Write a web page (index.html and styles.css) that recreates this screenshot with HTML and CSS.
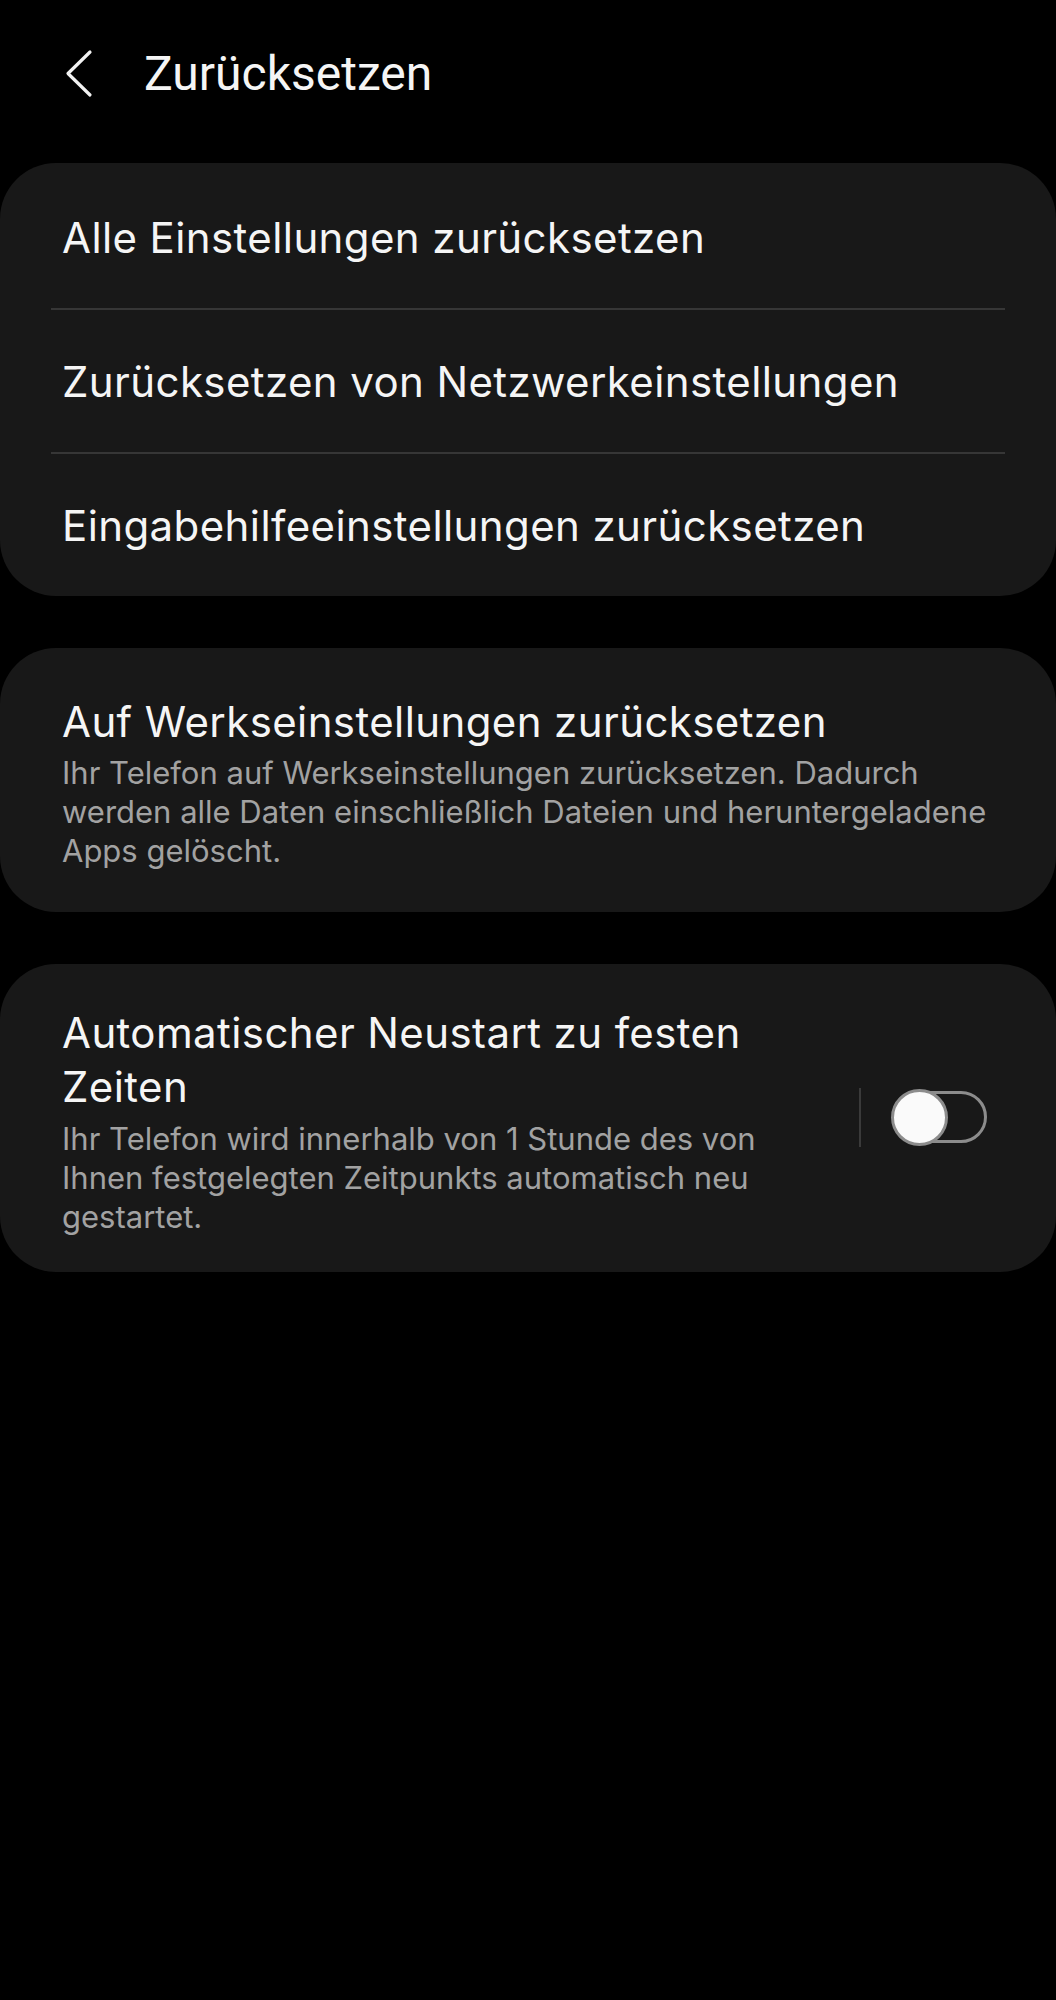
FILE: index.html
```html
<!DOCTYPE html>
<html lang="de">
<head>
    <meta charset="UTF-8">
    <meta name="viewport" content="width=device-width, initial-scale=1.0">
    <title>Zurücksetzen</title>
    <link rel="stylesheet" href="styles.css">
</head>
<body>

<div class="screen">
    <div class="app-bar">
        <svg class="back" width="30" height="50" viewBox="0 0 30 50">
            <polyline points="25,3 3,24.5 25,46" fill="none" stroke="#f2f2f2" stroke-width="3.2" stroke-linecap="round" stroke-linejoin="round"/>
        </svg>
        <h1>Zurücksetzen</h1>
    </div>

    <div class="card">
        <div class="row first">
            <div class="title">Alle Einstellungen zurücksetzen</div>
        </div>
        <div class="divider"></div>
        <div class="row">
            <div class="title">Zurücksetzen von Netzwerkeinstellungen</div>
        </div>
        <div class="divider"></div>
        <div class="row">
            <div class="title">Eingabehilfeeinstellungen zurücksetzen</div>
        </div>
    </div>

    <div class="card">
        <div class="row detail">
            <div class="title">Auf Werkseinstellungen zurücksetzen</div>
            <div class="summary">Ihr Telefon auf Werkseinstellungen zurücksetzen. Dadurch werden alle Daten einschließlich Dateien und heruntergeladene Apps gelöscht.</div>
        </div>
    </div>

    <div class="card">
        <div class="row detail switch-row">
            <div class="text">
                <div class="title">Automatischer Neustart zu festen Zeiten</div>
                <div class="summary">Ihr Telefon wird innerhalb von 1 Stunde des von Ihnen festgelegten Zeitpunkts automatisch neu gestartet.</div>
            </div>
            <div class="vline"></div>
            <div class="switch">
                <div class="track"></div>
                <div class="knob"></div>
            </div>
        </div>
    </div>
</div>

</body>
</html>
```

FILE: styles.css
```css
html, body {
    margin: 0;
    background: #000;
}
body {
    font-family: Inter, Roboto, "Noto Sans", sans-serif;
    color: #f5f5f5;
}
.screen {
    width: 1056px;
    min-height: 2000px;
}
.app-bar {
    display: flex;
    align-items: center;
    height: 163px;
    padding: 0 0 16px 65px;
    box-sizing: border-box;
}
.back {
    display: block;
}
.app-bar h1 {
    margin: 0 0 0 49px;
    font-family: Roboto, "Noto Sans", sans-serif;
    font-size: 48px;
    font-weight: 400;
}
.card {
    background: #181818;
    border-radius: 56px;
    margin-bottom: 52px;
}
.row {
    padding: 45px 40px 43px 62px;
}
.row.first {
    padding-top: 48px;
}
.title {
    font-size: 42px;
    line-height: 54px;
    letter-spacing: 0.4px;
}
.divider {
    height: 2px;
    margin: 0 51px;
    background: #363636;
}
.detail {
    padding-top: 47px;
    padding-bottom: 42px;
}
.summary {
    margin-top: 4px;
    font-size: 31px;
    line-height: 39px;
    color: #a2a2a2;
}
.switch-row {
    display: flex;
    align-items: center;
    padding-top: 42px;
    padding-bottom: 36px;
    padding-right: 69px;
}
.switch-row .text {
    flex: 1;
    padding-right: 50px;
}
.switch-row .summary {
    margin-top: 5px;
}
.vline {
    width: 2px;
    height: 59px;
    background: #3a3a3a;
    margin: 0 30px 8px 0;
}
.switch {
    position: relative;
    width: 96px;
    height: 56px;
    margin-bottom: 8px;
}
.track {
    position: absolute;
    left: 2px;
    top: 2px;
    width: 94px;
    height: 52px;
    box-sizing: border-box;
    border: 3px solid #8c8c8c;
    border-radius: 26px;
}
.knob {
    position: absolute;
    left: 0;
    top: 0;
    width: 57px;
    height: 57px;
    box-sizing: border-box;
    border-radius: 50%;
    background: #fafafa;
    border: 3px solid #8c8c8c;
}
```
